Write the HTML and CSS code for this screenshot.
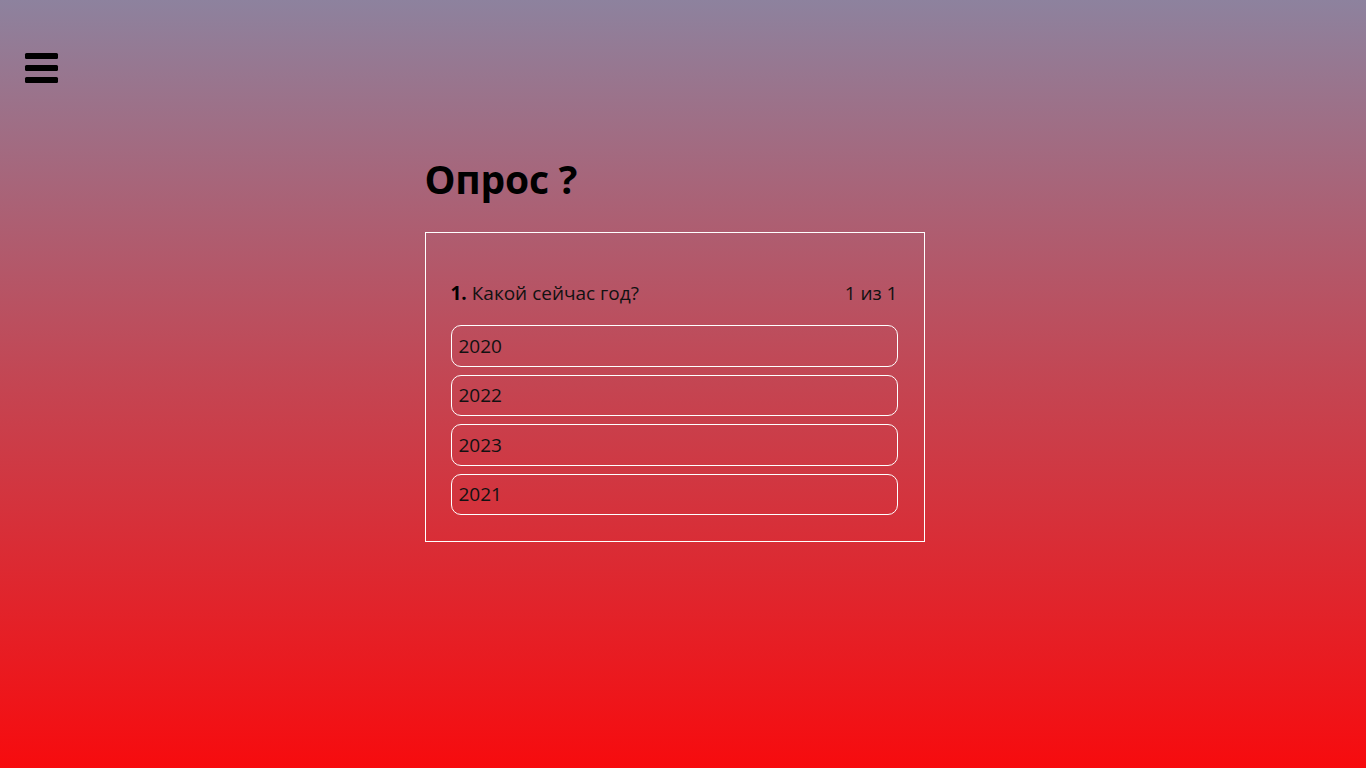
FILE: index.html
```html
<!DOCTYPE html>
<html lang="ru">
<head>
<meta charset="utf-8">
<title>Опрос</title>
<link rel="stylesheet" href="styles.css">
</head>
<body>
<div class="page">
  <header class="topbar">
    <button class="menu" aria-label="Меню">
      <span></span><span></span><span></span>
    </button>
  </header>
  <main class="content">
    <h1 class="title">Опрос ?</h1>
    <section class="quiz">
      <div class="question">
        <p class="q-text"><b>1.</b> Какой сейчас год?</p>
        <span class="q-count">1 из 1</span>
      </div>
      <ul class="options">
        <li class="option">2020</li>
        <li class="option">2022</li>
        <li class="option">2023</li>
        <li class="option">2021</li>
      </ul>
    </section>
  </main>
</div>
</body>
</html>
```
FILE: styles.css
```css
html {
  background: linear-gradient(to bottom, #8d829e 0%, #c44552 50%, #f70b0e 100%) fixed;
  min-height: 100%;
  overflow-y: scroll;
}
body {
  margin: 0;
  font-family: "Open Sans", "Noto Sans", sans-serif;
  color: #111;
}
.page {
  min-height: 831px;
  max-width: 1349px;
}
.topbar {
  padding: 53px 0 0 25px;
  height: 30px;
}
.menu {
  display: flex;
  flex-direction: column;
  gap: 6px;
  padding: 0;
  border: 0;
  background: none;
  width: 33px;
}
.menu span {
  display: block;
  width: 33px;
  height: 6px;
  border-radius: 1.5px;
  background: #000;
}
.content {
  width: 500px;
  margin: 0 auto;
}
.title {
  margin: 70px 0 27px;
  font-size: 39px;
  font-weight: 700;
  color: #000;
  line-height: 52px;
  letter-spacing: -0.2px;
}
.quiz {
  border: 1px solid #fff;
  padding: 47px 26px 26px 25px;
}
.question {
  display: flex;
  justify-content: space-between;
  align-items: center;
  font-size: 19px;
  line-height: 26px;
  margin-bottom: 19px;
}
.q-text {
  margin: 0;
}
.q-text b {
  font-weight: 700;
  color: #000;
}
.options {
  list-style: none;
  margin: 0;
  padding: 0;
  display: flex;
  flex-direction: column;
  gap: 8px;
}
.option {
  height: 39.5px;
  border: 1px solid #fff;
  border-radius: 10px;
  padding: 0 7px;
  display: flex;
  align-items: center;
  font-size: 19px;
}
```
